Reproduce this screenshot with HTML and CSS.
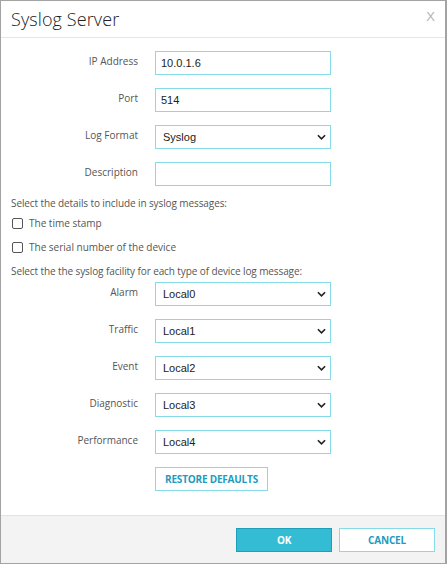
FILE: index.html
```html
<!DOCTYPE html>
<html>
<head>
<meta charset="utf-8">
<link rel="stylesheet" href="styles.css">
</head>
<body>
<div class="dialog">
  <div class="header">
    <h1 class="title">Syslog Server</h1>
    <span class="close">X</span>
  </div>
  <div class="content">
    <div class="form-grid">
      <label class="label">IP Address</label>
      <input class="field" type="text" value="10.0.1.6">
      <label class="label">Port</label>
      <input class="field" type="text" value="514">
      <label class="label">Log Format</label>
      <div class="select-wrap"><div class="field select">Syslog</div><svg class="chev" viewBox="0 0 10 6" width="9" height="6"><path d="M1 1 L5 5 L9 1" fill="none" stroke="#222" stroke-width="1.8"/></svg></div>
      <label class="label">Description</label>
      <input class="field" type="text" value="">
    </div>
    <p class="section">Select the details to include in syslog messages:</p>
    <div class="check-row first"><span class="box"></span><span>The time stamp</span></div>
    <div class="check-row"><span class="box"></span><span>The serial number of the device</span></div>
    <p class="section second">Select the the syslog facility for each type of device log message:</p>
    <div class="form-grid">
      <label class="label">Alarm</label>
      <div class="select-wrap"><div class="field select">Local0</div><svg class="chev" viewBox="0 0 10 6" width="9" height="6"><path d="M1 1 L5 5 L9 1" fill="none" stroke="#222" stroke-width="1.8"/></svg></div>
      <label class="label">Traffic</label>
      <div class="select-wrap"><div class="field select">Local1</div><svg class="chev" viewBox="0 0 10 6" width="9" height="6"><path d="M1 1 L5 5 L9 1" fill="none" stroke="#222" stroke-width="1.8"/></svg></div>
      <label class="label">Event</label>
      <div class="select-wrap"><div class="field select">Local2</div><svg class="chev" viewBox="0 0 10 6" width="9" height="6"><path d="M1 1 L5 5 L9 1" fill="none" stroke="#222" stroke-width="1.8"/></svg></div>
      <label class="label">Diagnostic</label>
      <div class="select-wrap"><div class="field select">Local3</div><svg class="chev" viewBox="0 0 10 6" width="9" height="6"><path d="M1 1 L5 5 L9 1" fill="none" stroke="#222" stroke-width="1.8"/></svg></div>
      <label class="label">Performance</label>
      <div class="select-wrap"><div class="field select">Local4</div><svg class="chev" viewBox="0 0 10 6" width="9" height="6"><path d="M1 1 L5 5 L9 1" fill="none" stroke="#222" stroke-width="1.8"/></svg></div>
      <span></span>
      <div><button class="btn btn-outline restore">RESTORE DEFAULTS</button></div>
    </div>
  </div>
  <div class="footer">
    <button class="btn btn-primary">OK</button>
    <button class="btn btn-outline wide">CANCEL</button>
  </div>
</div>
</body>
</html>
```

FILE: styles.css
```css
* { box-sizing: border-box; }
html, body { margin: 0; padding: 0; background: #fff; }
body { font-family: "Open Sans", "Noto Sans", sans-serif; color: #555; }

.dialog {
  width: 447px;
  height: 564px;
  border: 1px solid #a3a3a3;
  border-right-width: 2px;
  display: flex;
  flex-direction: column;
  background: #fff;
}

.header {
  height: 37px;
  flex: none;
  border-bottom: 1px solid #e6e6e6;
  display: flex;
  align-items: center;
  justify-content: space-between;
  padding: 0 10px 0 10px;
}
.title {
  margin: 0;
  font-family: "Open Sans", sans-serif;
  font-weight: 300;
  font-size: 18px;
  color: #222;
  letter-spacing: 0.1px;
}
.close {
  font-family: "Liberation Sans", sans-serif;
  font-size: 13px;
  color: #b4b4b4;
  margin-top: -6px;
}

.content {
  flex: 1;
  padding: 13px 10px 0 10px;
  font-size: 10px;
}

.form-grid {
  display: grid;
  grid-template-columns: 127px 176px;
  column-gap: 17px;
  row-gap: 13px;
}
.label {
  text-align: right;
  font-size: 10px;
  color: #555;
  padding-top: 3px;
  line-height: 14px;
}
.field {
  width: 176px;
  height: 24px;
  border: 1px solid #86dbe8;
  background: #fff;
  font-family: "Liberation Sans", Arial, sans-serif;
  font-size: 11px;
  color: #222;
  padding: 0 5px;
  margin: 0;
  outline: none;
  display: block;
}
.select {
  line-height: 22px;
  padding-left: 7px;
}
.select-wrap {
  position: relative;
  width: 176px;
}
.chev {
  position: absolute;
  right: 5px;
  top: 9px;
}

.section {
  margin: 10px 0 0 0;
  line-height: 14px;
  color: #555;
  letter-spacing: -0.1px;
}
.section.second { margin-top: 10px; margin-bottom: 4px; }

.check-row {
  display: flex;
  align-items: center;
  gap: 6px;
  height: 14px;
  margin-top: 10px;
}
.check-row.first { margin-top: 6px; }
.box {
  width: 11px;
  height: 11px;
  border: 1px solid #555;
  border-radius: 2px;
  background: #fff;
  margin-left: 1px;
}

.btn {
  font-family: "Open Sans", sans-serif;
  font-weight: 700;
  font-size: 10px;
  letter-spacing: -0.2px;
  height: 24px;
  padding: 0;
  cursor: pointer;
}
.btn-outline {
  background: #fff;
  border: 1px solid #86dbe8;
  color: #1b9cc0;
}
.restore {
  width: 113px;
}
.btn-primary {
  width: 96px;
  background: #33bcd4;
  border: 1px solid #1d9fb8;
  color: #fff;
}
.wide { width: 96px; }

.footer {
  height: 48px;
  flex: none;
  border-top: 1px solid #e3e3e3;
  background: #f3f3f3;
  display: flex;
  justify-content: flex-end;
  align-items: flex-start;
  gap: 7px;
  padding: 12px 10px 0 0;
}
```
